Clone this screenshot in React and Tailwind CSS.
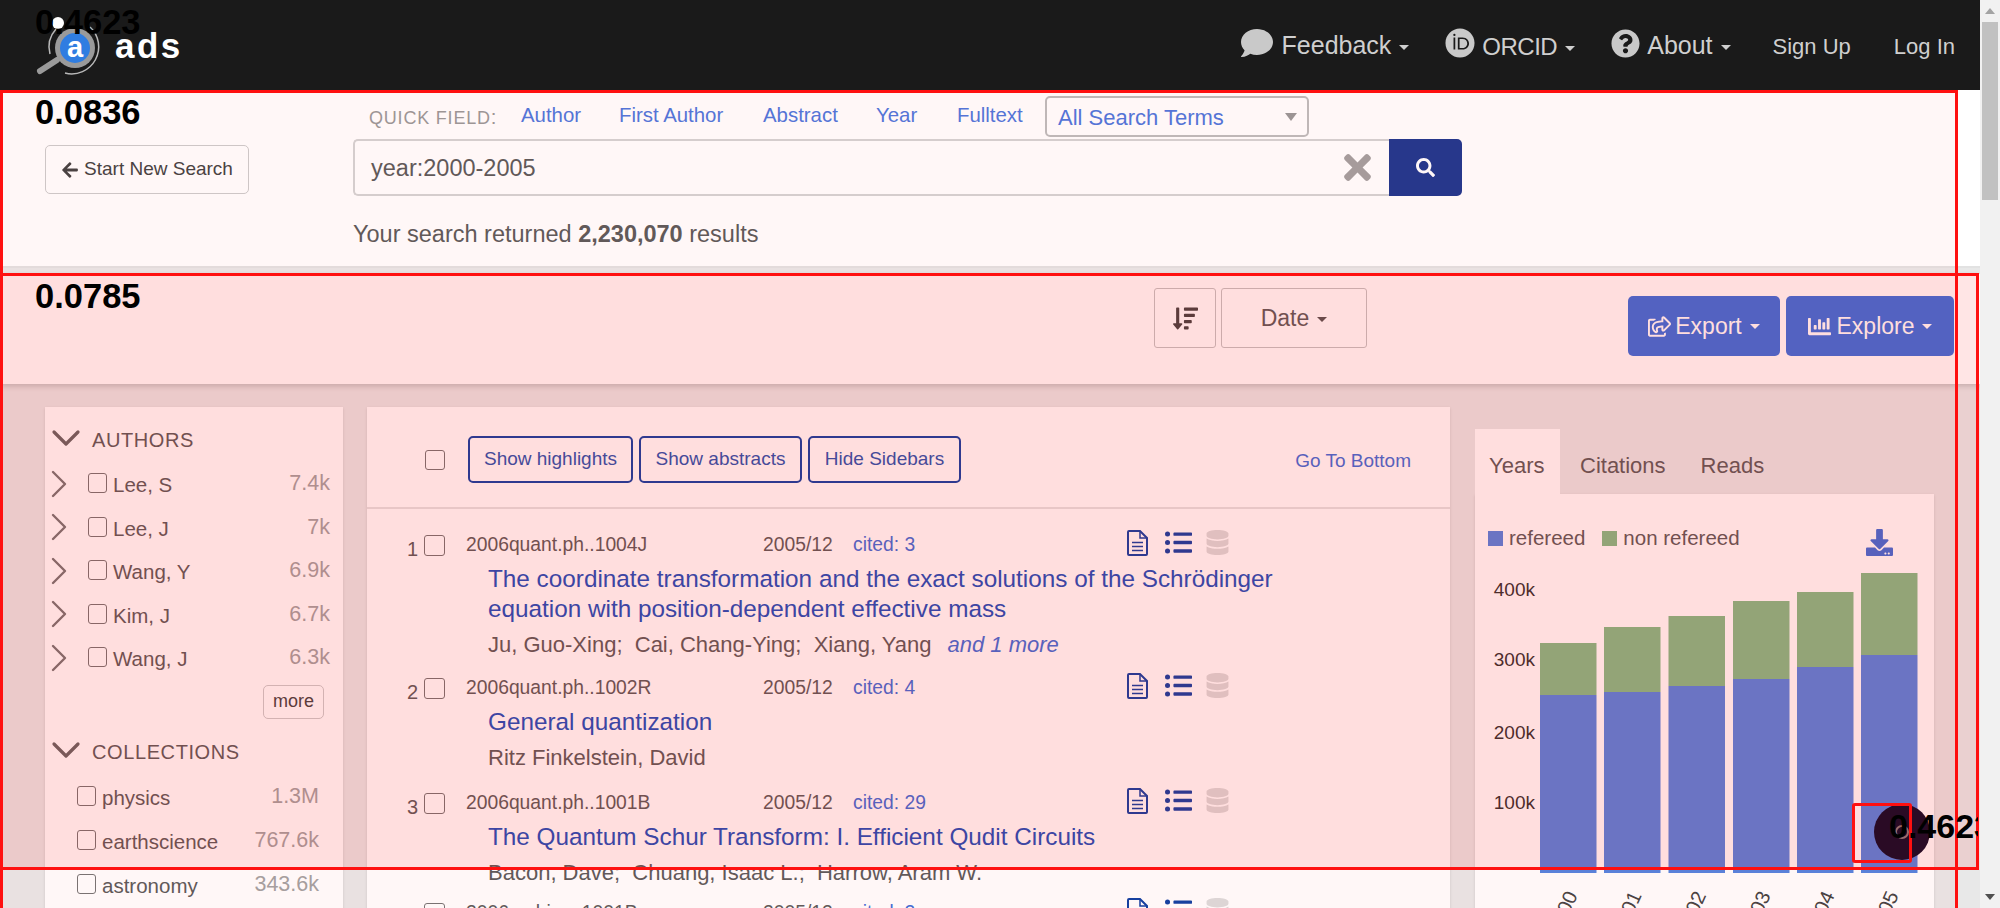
import { FaComment, FaQuestionCircle, FaArrowLeft, FaTimes, FaSearch, FaSortAmountDown, FaRegShareSquare, FaChartBar, FaListUl, FaDatabase, FaOrcid, FaDownload } from "react-icons/fa";
import { ChevronRight, ChevronDown } from "lucide-react";

const authors = [
  ["Lee, S", "7.4k"],
  ["Lee, J", "7k"],
  ["Wang, Y", "6.9k"],
  ["Kim, J", "6.7k"],
  ["Wang, J", "6.3k"],
];

const collections = [
  ["physics", "1.3M"],
  ["earthscience", "767.6k"],
  ["astronomy", "343.6k"],
];

const results = [
  {
    n: 1,
    code: "2006quant.ph..1004J",
    cited: 3,
    title: ["The coordinate transformation and the exact solutions of the Schrödinger", "equation with position-dependent effective mass"],
    authors: "Ju, Guo-Xing;\u00a0 Cai, Chang-Ying;\u00a0 Xiang, Yang",
    more: "and 1 more",
    h: "h-[143px]",
  },
  { n: 2, code: "2006quant.ph..1002R", cited: 4, title: ["General quantization"], authors: "Ritz Finkelstein, David", h: "h-[115px]" },
  {
    n: 3,
    code: "2006quant.ph..1001B",
    cited: 29,
    title: ["The Quantum Schur Transform: I. Efficient Qudit Circuits"],
    authors: "Bacon, Dave;\u00a0 Chuang, Isaac L.;\u00a0 Harrow, Aram W.",
    h: "h-[110px]",
  },
  { n: 4, code: "2006archive..1001B", cited: 2, title: [], authors: "", h: "h-[100px]" },
];

// top of the green and blue part of each bar, in page pixels
const bars = [
  { x: 65, green: 643, blue: 695, label: "2000" },
  { x: 129, green: 627, blue: 692, label: "2001" },
  { x: 193.5, green: 616, blue: 686, label: "2002" },
  { x: 258, green: 601, blue: 679, label: "2003" },
  { x: 322, green: 592, blue: 667, label: "2004" },
  { x: 386, green: 573, blue: 655, label: "2005" },
];

const CHART_TOP = 557;
const CHART_BOTTOM = 873;

const Box = ({ className = "" }) => (
  <input type="checkbox" className={`appearance-none border border-[#767676] bg-white rounded-[3px] shrink-0 ${className}`} />
);

const Caret = ({ className = "" }) => (
  <span className={`inline-block w-0 h-0 border-x-[5px] border-x-transparent border-t-[5px] ml-2 align-middle ${className}`} />
);

const Logo = () => (
  <svg width="80" height="64" viewBox="0 0 80 64" className="shrink-0 mt-[6px]">
    <circle cx="47" cy="32" r="20" fill="#9a9a9a" />
    <circle cx="47" cy="32" r="15" fill="#2f7de1" />
    <path d="M62 11 A27 27 0 0 1 37 57" fill="none" stroke="#b8b8b8" strokeWidth="1.5" />
    <path d="M28 13 A27 27 0 0 0 22 38" fill="none" stroke="#b8b8b8" strokeWidth="1.5" />
    <line x1="12" y1="55" x2="29" y2="44" stroke="#9a9a9a" strokeWidth="6" strokeLinecap="round" />
    <circle cx="30" cy="7" r="6" fill="#fff" />
    <text x="47" y="41" textAnchor="middle" fontSize="29" fontWeight="700" fill="#fff" fontFamily="Liberation Sans, sans-serif">a</text>
  </svg>
);

const DocIcon = () => (
  <svg width="21" height="26" viewBox="0 0 21 26" className="mt-[-5px] shrink-0" fill="none" stroke="#1042a4" strokeWidth="2">
    <path d="M1 2 a1 1 0 0 1 1-1 h11 l7 7 v16 a1 1 0 0 1-1 1 h-17 a1 1 0 0 1-1-1 z" />
    <path d="M13 1 v7 h7" strokeWidth="1.5" />
    <path d="M5 12.5 h11 M5 16.5 h11 M5 20.5 h11" strokeWidth="1.6" />
  </svg>
);

const Nav = () => (
  <nav className="h-[90px] bg-[#1a1a1a] flex items-center pl-[28px] text-[#cfcfcf]">
    <Logo />
    <span className="ml-[7px] text-[35px] font-bold text-white tracking-[2.5px] mt-[2px]">ads</span>
    <div className="ml-auto flex items-center pr-[25px]">
      <FaComment className="text-[32px] text-[#c9c9c9] mt-[-4px]" />
      <span className="ml-[9px] text-[25px] mt-[1px]">Feedback<Caret className="border-t-[#cfcfcf]" /></span>
      <FaOrcid className="ml-[36px] text-[30px] text-[#c9c9c9] mt-[-4px]" />
      <span className="ml-[7px] text-[24px] mt-[3px] tracking-[-0.5px]">ORCID<Caret className="border-t-[#cfcfcf]" /></span>
      <FaQuestionCircle className="ml-[36px] text-[29px] text-[#c9c9c9] mt-[-4px]" />
      <span className="ml-[7px] text-[25px] mt-[1px]">About<Caret className="border-t-[#cfcfcf]" /></span>
      <span className="ml-[42px] text-[22px] mt-[3px]">Sign Up</span>
      <span className="ml-[43px] text-[22px] mt-[3px]">Log In</span>
    </div>
  </nav>
);

const SearchBar = () => (
  <section className="h-[178px] border-b-2 border-[#e2e2e2] flex text-[#5c5c5c]">
    <div className="w-[353px] pl-[45px] pt-[55px] shrink-0">
      <button className="w-[204px] h-[49px] border border-[#ccc] rounded-[5px] bg-white text-[19px] flex items-center justify-center gap-[5px] text-[#444]">
        <FaArrowLeft className="text-[18px]" />
        Start New Search
      </button>
    </div>
    <div className="w-[1110px]">
      <div className="h-[49px] flex items-end pb-[2px] text-[20.4px] text-[#4f78dd]">
        <span className="ml-[16px] w-[152px] text-[#9a9a9a] tracking-[0.8px] pb-[4px]">
          <span className="text-[18px]">QUICK FIELD</span>:
        </span>
        <span className="w-[98px] pb-[6px]">Author</span>
        <span className="w-[144px] pb-[6px]">First Author</span>
        <span className="w-[113px] pb-[6px]">Abstract</span>
        <span className="w-[81px] pb-[6px]">Year</span>
        <span className="w-[88px] pb-[6px]">Fulltext</span>
        <div className="w-[264px] h-[41px] border-2 border-[#bdbdbd] rounded-[5px] flex items-center justify-between pl-[11px] pr-[10px] text-[22px] bg-white">
          <span className="mt-[2px]">All Search Terms</span>
          <span className="w-0 h-0 border-x-[6px] border-x-transparent border-t-[8px] border-t-[#999]" />
        </div>
      </div>
      <div className="flex h-[57px]">
        <div className="w-[1036px] border-2 border-[#d4d4d4] border-r-0 rounded-l-[5px] bg-white flex items-center justify-between pl-[16px] pr-[12px] text-[23.5px]">
          <span className="mt-[2px]">year:2000-2005</span>
          <FaTimes className="text-[#a3a0a0] text-[39px]" />
        </div>
        <button className="w-[73px] bg-[#20398f] rounded-r-[5px] flex items-center justify-center text-white text-[19px]">
          <FaSearch />
        </button>
      </div>
      <p className="mt-[21px] text-[23.5px]">
        Your search returned <b>2,230,070</b> results
      </p>
    </div>
  </section>
);

const Toolbar = () => (
  <section className="mt-[6px] h-[110px] bg-white shadow-[0_2px_6px_rgba(0,0,0,0.18)] flex relative text-[#5c5c5c]">
    <div className="ml-[1154px] mt-[14px] flex gap-[5px] h-[60px]">
      <button className="w-[62px] border border-[#c4c4c4] rounded-[3px] flex items-center justify-center text-[#444] text-[25px]">
        <FaSortAmountDown />
      </button>
      <button className="w-[146px] border border-[#c4c4c4] rounded-[3px] text-[23px]">
        Date<Caret className="border-t-[#555]" />
      </button>
    </div>
    <div className="ml-[261px] mt-[22px] flex gap-[6px] h-[60px] text-[23px] text-white">
      <button className="w-[152px] rounded-[5px] bg-[#3971de] flex items-center justify-center">
        <FaRegShareSquare className="mr-[4px]" />
        Export<Caret className="border-t-white" />
      </button>
      <button className="w-[168px] rounded-[5px] bg-[#3971de] flex items-center justify-center">
        <FaChartBar className="mr-[6px]" />
        Explore<Caret className="border-t-white" />
      </button>
    </div>
  </section>
);

const FacetRow = ({ name, count, nested }) => (
  <div className={`flex items-center text-[20.5px] ${nested ? "h-[44px] pl-[32px]" : "h-[43.5px] pl-[5px]"}`}>
    {!nested && <ChevronRight size={48} strokeWidth={1.2} className="text-[#777] shrink-0 ml-[-15px] mr-[5px] mt-[-4px]" />}
    <Box className="w-[19px] h-[20px] mr-[6px] mt-[-5px]" />
    <span>{name}</span>
    <span className={`ml-auto text-[#a3a3a3] text-[21.5px] mt-[-5px] ${nested ? "mr-[24px]" : "mr-[13px]"}`}>{count}</span>
  </div>
);

const FacetTitle = ({ children }) => (
  <div className="h-[43px] flex items-center pl-[6px] text-[20px] tracking-[0.6px]">
    <ChevronDown size={48} strokeWidth={1.6} className="text-[#666] shrink-0 ml-[-9px] mr-[2px] mt-[-4px]" />
    {children}
  </div>
);

const Sidebar = () => (
  <aside className="w-[298px] bg-white shadow-sm pt-[11px] shrink-0 text-[#5c5c5c]">
    <FacetTitle>AUTHORS</FacetTitle>
    <div className="pt-[3px]">
      {authors.map(([name, count]) => (
        <FacetRow key={name} name={name} count={count} />
      ))}
    </div>
    <div className="h-[49px] flex justify-end pr-[19px] pt-[3px]">
      <button className="w-[61px] h-[34px] border border-[#ccc] rounded-[5px] text-[#444] text-[18px]">more</button>
    </div>
    <FacetTitle>COLLECTIONS</FacetTitle>
    <div className="pt-[3px]">
      {collections.map(([name, count]) => (
        <FacetRow key={name} name={name} count={count} nested />
      ))}
    </div>
  </aside>
);

const ResultRow = ({ row }) => (
  <div className={`flex text-[#5c5c5c] ${row.h}`}>
    <div className="w-[99px] flex justify-end items-start text-[20px] shrink-0">
      <span className="mt-[4px]">{row.n}</span>
      <Box className="w-[21px] h-[21px] ml-[6px] mt-[5px] mr-[21px]" />
    </div>
    <div>
      <div className="flex h-[30px] items-center text-[19.3px]">
        <span className="w-[297px]">{row.code}</span>
        <span className="w-[90px]">2005/12</span>
        <span className="w-[274px] text-[#3f6fd8]">cited: {row.cited}</span>
        <DocIcon />
        <FaListUl className="text-[#1042a4] text-[27px] ml-[17px] mt-[-5px]" />
        <FaDatabase className="text-[#dcdcdc] text-[25px] ml-[13px] mt-[-5px]" />
      </div>
      <div className="ml-[22px] mt-[4px] text-[24.3px] leading-[30px] text-[#2050bb] whitespace-nowrap">
        {row.title.map((line) => (
          <div key={line}>{line}</div>
        ))}
      </div>
      <div className="ml-[22px] mt-[4px] text-[22px] whitespace-nowrap">
        {row.authors}
        {row.more && <i className="ml-[16px] text-[#3f6fd8]">{row.more}</i>}
      </div>
    </div>
  </div>
);

const sideButtons = [
  { label: "Show highlights", w: "w-[165px]" },
  { label: "Show abstracts", w: "w-[163px]" },
  { label: "Hide Sidebars", w: "w-[153px]" },
];

const Results = () => (
  <main className="w-[1083px] ml-[24px] bg-white shadow-sm shrink-0">
    <div className="h-[102px] border-b-2 border-[#e4e4e4] flex items-center text-[19px]">
      <Box className="w-[20px] h-[20px] ml-[58px] mt-[5px]" />
      <div className="flex gap-[6px] ml-[23px] mt-[4px]">
        {sideButtons.map((b) => (
          <button key={b.label} className={`${b.w} h-[47px] border-2 border-[#1042a4] rounded-[5px] text-[#2a55b0]`}>
            {b.label}
          </button>
        ))}
      </div>
      <span className="ml-auto mr-[39px] mt-[8px] text-[#3f6fd8]">Go To Bottom</span>
    </div>
    <div className="pt-[21px]">
      {results.map((row) => (
        <ResultRow key={row.n} row={row} />
      ))}
    </div>
  </main>
);

const Chart = () => (
  <svg width="459" height="351" viewBox="0 0 459 351" className="block" fontFamily="Liberation Sans, sans-serif">
    {[["400k", 589], ["300k", 659], ["200k", 732], ["100k", 802]].map(([t, y]) => (
      <text key={t} x="60" y={y - CHART_TOP + 7} textAnchor="end" fontSize="19" fill="#333">{t}</text>
    ))}
    {bars.map((b) => (
      <g key={b.label}>
        <rect x={b.x} y={b.green - CHART_TOP} width="56.5" height={b.blue - b.green} fill="#83bd89" />
        <rect x={b.x} y={b.blue - CHART_TOP} width="56.5" height={CHART_BOTTOM - b.blue} fill="#5585e0" />
        <text transform={`translate(${b.x + 38} 338) rotate(-66)`} textAnchor="end" fontSize="20" fill="#444">{b.label}</text>
      </g>
    ))}
  </svg>
);

const ChartPanel = () => (
  <div className="w-[459px] ml-[25px] pt-[22px] shrink-0 text-[#5c5c5c]">
    <div className="h-[65px] flex text-[22px]">
      <span className="w-[85px] pl-[14px] pt-[8px] bg-white flex items-center">Years</span>
      <span className="pl-[20px] pr-[20px] pt-[8px] flex items-center">Citations</span>
      <span className="px-[15px] pt-[8px] flex items-center">Reads</span>
    </div>
    <div className="bg-white shadow-sm h-[420px] pt-[25px]">
      <div className="h-[38px] flex items-center pl-[13px] pr-[41px] text-[20.5px]">
        <span className="w-[15px] h-[15px] bg-[#5585e0] mr-[6px]" />
        refereed
        <span className="w-[15px] h-[15px] bg-[#83bd89] ml-[17px] mr-[6px]" />
        non refereed
        <FaDownload className="ml-auto text-[#3f6fd8] text-[27px] mt-[9px]" />
      </div>
      <Chart />
    </div>
  </div>
);

const Scrollbar = () => (
  <div className="w-[20px] bg-[#f1f1f1] flex flex-col items-center justify-between shrink-0">
    <div className="w-full flex flex-col items-center">
      <span className="mt-[8px] w-0 h-0 border-x-[5px] border-x-transparent border-b-[6px] border-b-[#a3a3a3]" />
      <span className="mt-[8px] w-[16px] h-[178px] bg-[#c1c1c1]" />
    </div>
    <span className="mb-[8px] w-0 h-0 border-x-[5px] border-x-transparent border-t-[6px] border-t-[#505050]" />
  </div>
);

export default function App() {
  return (
    <div className="h-[908px] flex overflow-hidden bg-white font-['Liberation_Sans',sans-serif]">
      <div className="relative w-[1980px] shrink-0 overflow-hidden bg-[#e8e8e8]">
        <div className="bg-white">
          <Nav />
          <SearchBar />
        </div>
        <div className="bg-white">
          <Toolbar />
        </div>
        <div className="flex pl-[45px] pt-[23px]">
          <Sidebar />
          <Results />
          <ChartPanel />
        </div>

        {/* chat bubble in the corner */}
        <div className="absolute left-[1874px] top-[804px] w-[56px] h-[56px] rounded-full bg-[#0a0c2a] flex items-center justify-center">
          <span className="w-[14px] h-[14px] rounded-full border-2 border-[#8a7a7a]" />
        </div>

        {/* score overlays */}
        <div className="absolute left-0 top-[90px] w-[1958px] h-[840px] border-[3px] border-[#ff1010] bg-[#ff0000]/3 pointer-events-none" />
        <div className="absolute left-0 top-[273px] w-[1979px] h-[597px] border-[3px] border-[#ff1010] bg-[#ff0000]/10 pointer-events-none" />
        <div className="absolute left-[1852px] top-[803px] w-[60px] h-[60px] border-[3px] border-[#ff1010] rounded-[3px] pointer-events-none" />

        <span className="absolute left-[35px] top-[-3px] text-[34.5px] font-bold text-black">0.4623</span>
        <span className="absolute left-[35px] top-[87px] text-[34.5px] font-bold text-black">0.0836</span>
        <span className="absolute left-[35px] top-[271px] text-[34.5px] font-bold text-black">0.0785</span>
        <span className="absolute left-[1889px] top-[801px] w-[89px] overflow-hidden whitespace-nowrap text-[34px] font-bold text-black">0.4623</span>
      </div>
      <Scrollbar />
    </div>
  );
}
